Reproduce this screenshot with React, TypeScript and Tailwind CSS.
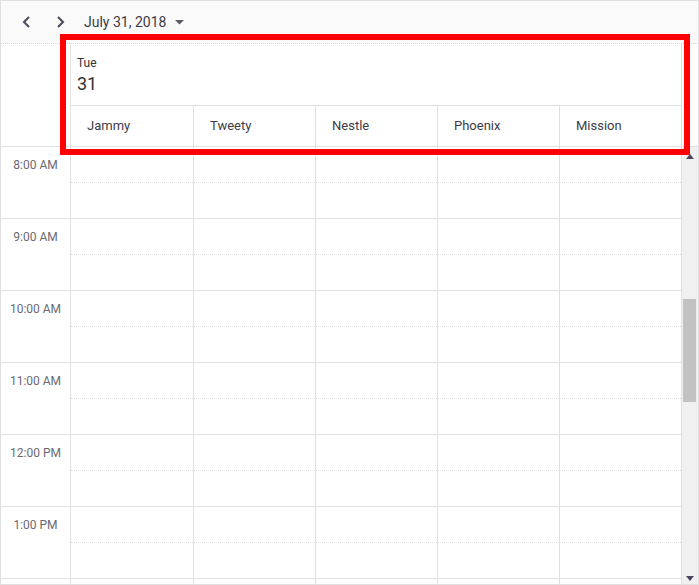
import React from 'react';

const resources = ['Jammy', 'Tweety', 'Nestle', 'Phoenix', 'Mission'];
const hours = ['8:00 AM', '9:00 AM', '10:00 AM', '11:00 AM', '12:00 PM', '1:00 PM', ''];

const App: React.FC = () => {
  return (
    <div
      className="relative w-[699px] h-[585px] overflow-hidden border border-[#e0e0e0] bg-white text-[#333]"
      style={{ fontFamily: 'Roboto, "Liberation Sans", sans-serif' }}
    >
      {/* toolbar */}
      <div className="flex h-[43px] items-center border-b border-dotted border-[#d6d6d6] bg-[#fafafa]">
        <button className="ml-[20px] flex h-[20px] w-[12px] items-center justify-center">
          <svg width="10" height="14" viewBox="0 0 10 14">
            <polyline points="7,2 2,7 7,12" fill="none" stroke="#4a4a5a" strokeWidth="2" />
          </svg>
        </button>
        <button className="ml-[21px] flex h-[20px] w-[12px] items-center justify-center">
          <svg width="10" height="14" viewBox="0 0 10 14">
            <polyline points="3,2 8,7 3,12" fill="none" stroke="#4a4a5a" strokeWidth="2" />
          </svg>
        </button>
        <span className="ml-[18px] text-[14px] text-[#3a3a48]">July 31, 2018</span>
        <svg className="ml-[9px]" width="9" height="5" viewBox="0 0 9 5">
          <polygon points="0,0 9,0 4.5,4.5" fill="#5a5a68" />
        </svg>
      </div>

      {/* header */}
      <div className="flex border-b border-[#e0e0e0]">
        <div className="w-[70px] shrink-0 border-r border-[#e0e0e0]" />
        <div className="flex w-[611px] flex-col">
          <div className="h-[62px] border-b border-r border-[#e0e0e0] pl-[6px] pt-[12px]">
            <div className="text-[12px] leading-[14px] text-[#333]">Tue</div>
            <div className="mt-[4px] text-[18px] leading-[20px] text-[#333]">31</div>
          </div>
          <div className="flex h-[40px]">
            {resources.map((r, i) => (
              <div
                key={r}
                className={`flex items-center border-r border-[#e0e0e0] pl-[16px] text-[13px] text-[#3c3c48] ${
                  i === 0 ? 'w-[123px]' : 'w-[122px]'
                }`}
              >
                {r}
              </div>
            ))}
          </div>
        </div>
        <div className="flex-1" />
      </div>

      {/* body */}
      <div className="flex">
        <div className="w-[70px] shrink-0 border-r border-[#e0e0e0]">
          {hours.map((h, i) => (
            <div key={i} className="h-[72px] border-b border-[#e0e0e0] pt-[9px] text-center text-[12px] text-[#6a6a72]">
              {h}
            </div>
          ))}
        </div>
        <div className="flex w-[611px]">
          {resources.map((r, i) => (
            <div key={r} className={`border-r border-[#e0e0e0] ${i === 0 ? 'w-[123px]' : 'w-[122px]'}`}>
              {hours.map((_, j) => (
                <div key={j} className="h-[72px] border-b border-[#e0e0e0]">
                  <div className="h-[36px] border-b border-dotted border-[#dcdcdc]" />
                </div>
              ))}
            </div>
          ))}
        </div>
        {/* scrollbar */}
        <div className="relative h-[440px] flex-1 bg-[#f0f0f0]">
          <svg className="absolute left-[4px] top-[7px]" width="8" height="5" viewBox="0 0 8 5">
            <polygon points="0,5 8,5 4,0" fill="#4f4560" />
          </svg>
          <div className="absolute left-[1px] top-[152px] h-[103px] w-[13px] bg-[#c2c2c2]" />
          <svg className="absolute left-[4px] top-[429px]" width="8" height="5" viewBox="0 0 8 5">
            <polygon points="0,0 8,0 4,5" fill="#4f4560" />
          </svg>
        </div>
      </div>

      {/* highlight annotation */}
      <div className="pointer-events-none absolute left-[59px] top-[33px] h-[121px] w-[630px] border-[6px] border-[#ff0000]" />
    </div>
  );
};

export default App;
